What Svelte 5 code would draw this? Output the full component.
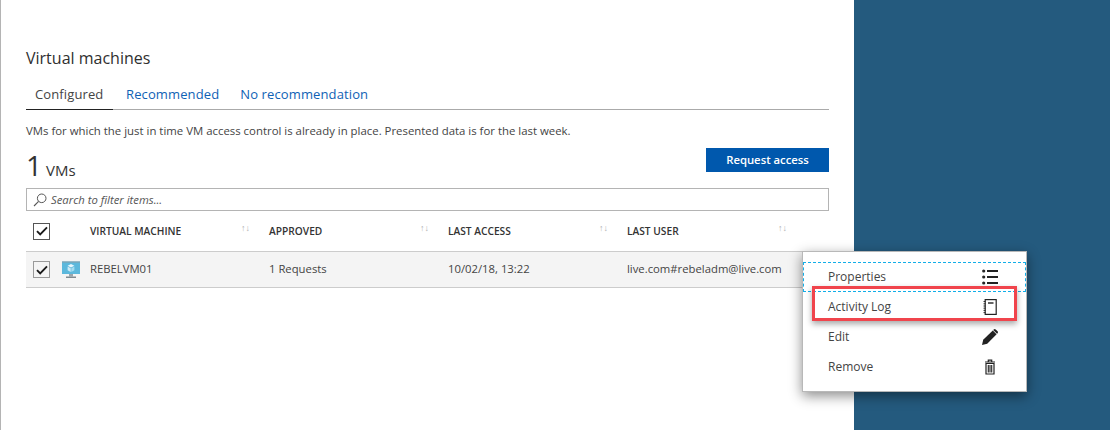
<script lang="ts">
	type Vm = { name: string; approved: string; access: string; user: string };

	const columns = ['VIRTUAL MACHINE', 'APPROVED', 'LAST ACCESS', 'LAST USER'];
	const tabs = ['Configured', 'Recommended', 'No recommendation'];
	const vms: Vm[] = [
		{ name: 'REBELVM01', approved: '1 Requests', access: '10/02/18, 13:22', user: 'live.com#rebeladm@live.com' }
	];
</script>

{#snippet check()}
	<svg class="tick" viewBox="0 0 12 10" width="12" height="10">
		<path d="M1 5.2 L4.2 8.4 L11 1.4" fill="none" stroke="#1a1a1a" stroke-width="1.9" />
	</svg>
{/snippet}

<div class="page">
	<section class="panel">
		<h2 class="title">Virtual machines</h2>

		<nav class="tabs">
			{#each tabs as tab, i}
				<span class="tab" class:active={i === 0}>{tab}</span>
			{/each}
		</nav>

		<p class="desc">VMs for which the just in time VM access control is already in place. Presented data is for the last week.</p>

		<div class="summary">
			<div class="count"><span class="num">1</span><span class="unit">VMs</span></div>
			<button class="request">Request access</button>
		</div>

		<div class="search">
			<svg viewBox="0 0 14 14" width="14" height="14">
				<circle cx="8.7" cy="5.3" r="4.3" fill="none" stroke="#555" stroke-width="1" />
				<path d="M5.6 8.4 L1 13" stroke="#555" stroke-width="1.1" fill="none" />
			</svg>
			<span>Search to filter items...</span>
		</div>

		<div class="grid head">
			<span class="box head-box">{@render check()}</span>
			<span></span>
			{#each columns as col}
				<span class="col">
					<span>{col}</span>
					<span class="sort">↑↓</span>
				</span>
			{/each}
		</div>

		{#each vms as vm}
			<div class="grid row">
				<span class="box row-box">{@render check()}</span>
				<svg class="vm-icon" viewBox="0 0 18 18" width="18" height="18">
					<rect x="0" y="0.5" width="18" height="12.5" fill="#5cb8dc" />
					<rect x="0" y="0.5" width="18" height="1" fill="#8a9ba6" />
					<path d="M9 3 L12.4 4.8 L9 6.6 L5.6 4.8 Z" fill="#e8f6fc" />
					<path d="M5.6 5.5 L8.7 7.2 V11 L5.6 9.2 Z" fill="#cdeaf6" />
					<path d="M12.4 5.5 L9.3 7.2 V11 L12.4 9.2 Z" fill="#a5dcf0" />
					<rect x="7" y="13" width="4" height="2.5" fill="#9aa5ab" />
					<rect x="4" y="15.5" width="10" height="1.5" fill="#7f8a90" />
				</svg>
				<span class="cell">{vm.name}</span>
				<span class="cell">{vm.approved}</span>
				<span class="cell">{vm.access}</span>
				<span class="cell">{vm.user}</span>
			</div>
		{/each}
	</section>
	<aside class="side"></aside>

	<div class="menu">
		<div class="item focused">
			<span class="label">Properties</span>
			<svg viewBox="0 0 16 16" width="16" height="16">
				<circle cx="1.7" cy="2" r="1.6" fill="#222" />
				<circle cx="1.7" cy="8" r="1.6" fill="#222" />
				<circle cx="1.7" cy="14" r="1.6" fill="#222" />
				<path d="M5 2 H16 M5 8 H16 M5 14 H16" stroke="#222" stroke-width="2" />
			</svg>
		</div>
		<div class="item">
			<span class="label">Activity Log</span>
			<svg viewBox="0 0 16 16" width="16" height="16">
				<rect x="3.2" y="0.6" width="11" height="14.8" fill="none" stroke="#222" stroke-width="1.2" />
				<path d="M6 4 H11.5" stroke="#222" stroke-width="1.4" />
				<path d="M1.5 2.5 H3.5 M1.5 4.8 H3.5 M1.5 7 H3.5 M1.5 9.2 H3.5 M1.5 11.4 H3.5 M1.5 13.6 H3.5" stroke="#222" stroke-width="0.9" />
			</svg>
		</div>
		<div class="item">
			<span class="label">Edit</span>
			<svg viewBox="0 0 16 16" width="16" height="16">
				<path d="M0 16 L1.2 10.8 L10.8 1.4 L14.6 5.2 L5.2 14.8 Z" fill="#222" />
				<path d="M11.8 0.4 Q12.8 -0.3 13.7 0.4 L15.6 2.3 Q16.3 3.2 15.6 4.2 L15 4.8 L11.2 1 Z" fill="#222" />
			</svg>
		</div>
		<div class="item">
			<span class="label">Remove</span>
			<svg viewBox="0 0 16 16" width="16" height="16">
				<path d="M3 3 H13 M6.3 2.5 V1.2 H9.7 V2.5" fill="none" stroke="#222" stroke-width="1.2" />
				<path d="M4 4.5 H12 V15 H4 Z" fill="none" stroke="#222" stroke-width="1.2" />
				<path d="M6.3 6 V13.6 M8 6 V13.6 M9.7 6 V13.6" stroke="#222" stroke-width="1.1" />
			</svg>
		</div>
		<div class="highlight"></div>
	</div>
</div>

<style>
	:global(body) {
		margin: 0;
		background: #fff;
	}
	.page {
		position: relative;
		display: flex;
		width: 1110px;
		height: 430px;
		overflow: hidden;
		font-family: 'Open Sans', 'Noto Sans', sans-serif;
		color: #3a3a3a;
	}
	.panel {
		width: 854px;
		box-sizing: border-box;
		padding: 47px 25px 0 25px;
		border-left: 1px solid #b4b4b4;
		background: #fff;
	}
	.side {
		flex: 1;
		background: #245a7e;
	}
	.title {
		margin: 0;
		font-size: 16px;
		line-height: 22px;
		font-weight: 400;
		color: #2f2f2f;
	}
	.tabs {
		display: flex;
		margin-top: 11px;
		height: 29px;
		border-bottom: 1px solid #aaa;
	}
	.tab {
		padding: 0 13px 0 9px;
		margin-right: -1px;
		font-size: 13px;
		line-height: 29px;
		color: #0f62b5;
		letter-spacing: 0.12px;
	}
	.tab.active {
		color: #444;
		padding: 0 8px 0 9px;
		margin-right: 4px;
		box-shadow: 0 1px 0 #222;
		height: 29px;
		width: 70px;
	}
	.desc {
		margin: 14px 0 0;
		font-size: 11.4px;
		line-height: 14px;
		color: #444;
		white-space: nowrap;
	}
	.summary {
		display: flex;
		justify-content: space-between;
		align-items: flex-start;
		margin-top: 10px;
		height: 33px;
	}
	.count {
		display: flex;
		align-items: baseline;
		gap: 4px;
		color: #333;
	}
	.num {
		font-size: 28px;
		line-height: 34px;
	}
	.unit {
		font-size: 15px;
	}
	.request {
		width: 123px;
		height: 24px;
		border: none;
		padding: 0 0 2px;
		background: #0058ad;
		color: #fff;
		font-family: inherit;
		font-size: 11.3px;
		font-weight: 600;
	}
	.search {
		display: flex;
		align-items: center;
		gap: 4px;
		height: 23px;
		margin-top: 7px;
		box-sizing: border-box;
		padding-left: 6px;
		border: 1px solid #b4b4b4;
		font-size: 11.3px;
		font-style: italic;
		color: #555;
	}
	.grid {
		display: grid;
		grid-template-columns: 29px 35px 179px 179px 179px 179px 1fr;
		align-items: center;
		font-size: 11.3px;
	}
	.head {
		height: 40px;
		border-bottom: 1px solid #ccc;
		font-size: 10.2px;
		font-weight: 600;
		color: #333;
	}
	.row {
		height: 35px;
		background: #f4f4f4;
		border-bottom: 1px solid #ccc;
		color: #444;
	}
	.cell {
		margin-bottom: 2px;
	}
	.col {
		display: flex;
		justify-content: space-between;
		padding-right: 19px;
		white-space: nowrap;
	}
	.sort {
		font-size: 9px;
		font-weight: 400;
		color: #b0b0b0;
		margin-top: -3px;
	}
	.box {
		display: flex;
		align-items: center;
		justify-content: center;
		box-sizing: border-box;
		width: 17px;
		height: 17px;
		margin-left: 7px;
		border: 1px solid #555;
		background: #fff;
	}
	.row-box {
		border-color: #999;
		background: #f4f4f4;
	}
	.vm-icon {
		margin-left: 7px;
	}
	.menu {
		position: absolute;
		left: 802px;
		top: 251px;
		width: 225px;
		height: 141px;
		box-sizing: border-box;
		padding-top: 10px;
		background: #fff;
		border: 1px solid #b8b8b8;
		box-shadow: 0 4px 12px rgba(0, 0, 0, 0.45);
		font-size: 12px;
		color: #444;
	}
	.item {
		display: flex;
		align-items: center;
		justify-content: space-between;
		box-sizing: border-box;
		height: 30px;
		padding: 0 28px 0 25px;
	}
	.label {
		margin-bottom: 2px;
	}
	.focused {
		border: 1px dashed #12aee8;
		padding: 0 27px 0 24px;
	}
	.highlight {
		position: absolute;
		left: 9px;
		top: 34px;
		width: 199px;
		height: 29px;
		border: 3px solid #f0444c;
		box-shadow: 0 3px 6px rgba(0, 0, 0, 0.35);
	}
</style>
